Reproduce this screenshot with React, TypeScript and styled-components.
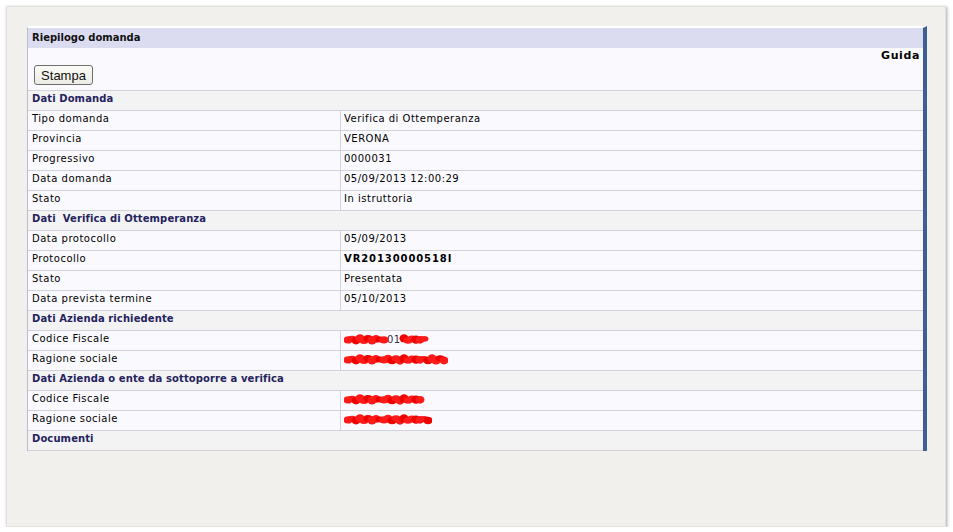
import styled, { createGlobalStyle } from "styled-components";

const GlobalStyle = createGlobalStyle`
  html, body {
    margin: 0;
    padding: 0;
    background: #ffffff;
  }
  body {
    font-family: "DejaVu Sans", Verdana, sans-serif;
    font-size: 11px;
    color: #000;
  }
`;

const Frame = styled.div`
  box-sizing: border-box;
  margin: 6px 0 0 6px;
  width: 940px;
  height: 521px;
  background: #f2f0ec;
  border: 1px solid #e2e0dc;
  box-shadow: 1px 1px 3px rgba(0, 0, 0, 0.35);
  padding: 19px 0 0 20px;
`;

const Sheet = styled.div`
  width: 895px;
  border-left: 1px solid #bcbccc;
  border-right: 4px solid #3d5f94;
  background: #fafafe;
  border-top: 2px solid #ffffff;
`;

const TitleBar = styled.div`
  height: 20px;
  line-height: 20px;
  background: #dcdcf1;
  padding-left: 4px;
  font-weight: bold;
  font-size: 10px;
  color: #111;
`;

const Tools = styled.div`
  height: 42px;
  display: flex;
  flex-direction: column;
  padding: 0 3px 0 6px;
`;

const Help = styled.div`
  align-self: flex-end;
  font-weight: bold;
  font-size: 11px;
  letter-spacing: 0.6px;
  line-height: 14px;
  margin-top: 1px;
`;

const PrintButton = styled.button`
  align-self: flex-start;
  margin-top: 2px;
  height: 20px;
  width: 59px;
  padding: 0;
  font-family: "Liberation Sans", Arial, sans-serif;
  font-size: 13px;
  color: #111;
  background: linear-gradient(#fbfbf7, #ecebe4);
  border: 1px solid #6e6e6e;
  border-radius: 3px;
`;

const Section = styled.div`
  height: 19px;
  line-height: 16px;
  border-top: 1px solid #d2d2da;
  background: #f3f3f3;
  padding-left: 4px;
  font-weight: bold;
  font-size: 10px;
  letter-spacing: 0.1px;
  color: #25235e;
  white-space: pre;
`;

const Row = styled.div`
  display: grid;
  grid-template-columns: 313px 1fr;
  height: 19px;
  border-top: 1px solid #d2d2da;
  background: #fafafe;
`;

const Label = styled.div`
  padding-left: 4px;
  line-height: 16px;
  border-right: 1px solid #d2d2da;
  font-size: 10px;
  letter-spacing: 0.5px;
`;

const Value = styled.div<{ $strong?: boolean }>`
  padding-left: 3px;
  line-height: 16px;
  font-size: 10px;
  letter-spacing: ${(p) => (p.$strong ? "0.9px" : "0.5px")};
  font-weight: ${(p) => (p.$strong ? "bold" : "normal")};
  display: flex;
  align-items: flex-start;
`;

const Closing = styled.div`
  border-top: 1px solid #d2d2da;
`;

const Blot = styled.svg`
  display: block;
`;

function Redacted({
  width,
  hint,
  hintAt = 0.5,
}: {
  width: number;
  hint?: string;
  hintAt?: number;
}) {
  const blobs = [];
  for (let x = 4; x < width - 3; x += 4) {
    const dy = Math.sin(x * 0.7) * 1.3;
    const near = hint && Math.abs(x - width * hintAt - 6) < 9;
    if (near) continue;
    blobs.push(
      <ellipse
        key={x}
        cx={x}
        cy={8.5 + dy}
        rx={4.5}
        ry={2.8 + Math.abs(Math.cos(x)) * 1.3}
        fill={x % 3 === 0 ? "#ee0000" : "#ff1a1a"}
      />
    );
  }
  return (
    <Blot width={width} height={16} viewBox={`0 0 ${width} 16`}>
      {hint && (
        <text
          x={width * hintAt}
          y={12}
          fontSize="10"
          fontFamily="DejaVu Sans, sans-serif"
          fill="#333"
        >
          {hint}
        </text>
      )}
      <g>{blobs}</g>
    </Blot>
  );
}

type Item =
  | { kind: "section"; title: string }
  | {
      kind: "row";
      label: string;
      value?: string;
      strong?: boolean;
      redact?: number;
      hint?: string;
      hintAt?: number;
    };

const items: Item[] = [
  { kind: "section", title: "Dati Domanda" },
  { kind: "row", label: "Tipo domanda", value: "Verifica di Ottemperanza" },
  { kind: "row", label: "Provincia", value: "VERONA" },
  { kind: "row", label: "Progressivo", value: "0000031" },
  { kind: "row", label: "Data domanda", value: "05/09/2013 12:00:29" },
  { kind: "row", label: "Stato", value: "In istruttoria" },
  { kind: "section", title: "Dati  Verifica di Ottemperanza" },
  { kind: "row", label: "Data protocollo", value: "05/09/2013" },
  { kind: "row", label: "Protocollo", value: "VR20130000518I", strong: true },
  { kind: "row", label: "Stato", value: "Presentata" },
  { kind: "row", label: "Data prevista termine", value: "05/10/2013" },
  { kind: "section", title: "Dati Azienda richiedente" },
  { kind: "row", label: "Codice Fiscale", redact: 86, hint: "01", hintAt: 0.5 },
  { kind: "row", label: "Ragione sociale", redact: 104 },
  { kind: "section", title: "Dati Azienda o ente da sottoporre a verifica" },
  { kind: "row", label: "Codice Fiscale", redact: 82 },
  { kind: "row", label: "Ragione sociale", redact: 88 },
  { kind: "section", title: "Documenti" },
];

export default function App() {
  return (
    <>
      <GlobalStyle />
      <Frame>
        <Sheet>
          <TitleBar>Riepilogo domanda</TitleBar>
          <Tools>
            <Help>Guida</Help>
            <PrintButton>Stampa</PrintButton>
          </Tools>
          {items.map((it, i) =>
            it.kind === "section" ? (
              <Section key={i}>{it.title}</Section>
            ) : (
              <Row key={i}>
                <Label>{it.label}</Label>
                <Value $strong={it.strong}>
                  {it.redact ? (
                    <Redacted width={it.redact} hint={it.hint} hintAt={it.hintAt} />
                  ) : (
                    it.value
                  )}
                </Value>
              </Row>
            )
          )}
          <Closing />
        </Sheet>
      </Frame>
    </>
  );
}
